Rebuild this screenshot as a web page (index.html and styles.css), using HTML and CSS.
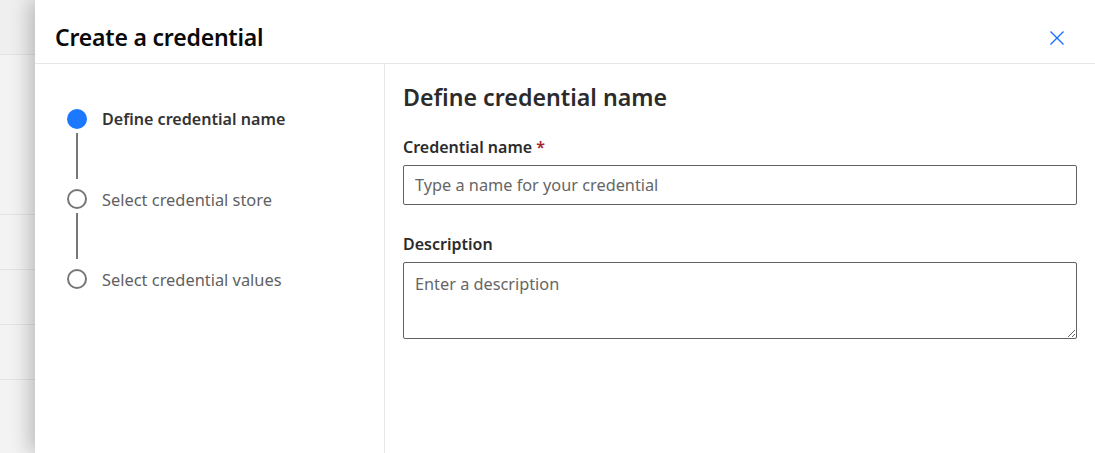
FILE: index.html
```html
<!DOCTYPE html>
<html lang="en">
<head>
<meta charset="utf-8">
<title>Create a credential</title>
<link rel="stylesheet" href="styles.css">
</head>
<body>
<div class="page">
  <div class="backdrop">
    <div class="bd-head"></div>
    <div class="bd-row r1"></div>
    <div class="bd-row"></div>
    <div class="bd-row"></div>
    <div class="bd-row"></div>
  </div>
  <div class="panel">
    <header class="panel-head">
      <h1 class="title">Create a credential</h1>
      <button class="close" aria-label="Close">
        <svg width="14" height="14" viewBox="0 0 14 14"><path d="M0.5 0.5 L13.5 13.5 M13.5 0.5 L0.5 13.5" stroke="#0f6cff" stroke-width="1.3" fill="none"/></svg>
      </button>
    </header>
    <div class="panel-body">
      <nav class="steps">
        <div class="step active">
          <span class="dot"></span>
          <span class="step-label">Define credential name</span>
        </div>
        <div class="connector"></div>
        <div class="step">
          <span class="dot"></span>
          <span class="step-label">Select credential store</span>
        </div>
        <div class="connector"></div>
        <div class="step">
          <span class="dot"></span>
          <span class="step-label">Select credential values</span>
        </div>
      </nav>
      <main class="content">
        <h2 class="section-title">Define credential name</h2>
        <div class="field">
          <label class="label" for="cname">Credential name <span class="req">*</span></label>
          <input id="cname" class="input" type="text" placeholder="Type a name for your credential">
        </div>
        <div class="field">
          <label class="label" for="cdesc">Description</label>
          <textarea id="cdesc" class="textarea" placeholder="Enter a description"></textarea>
        </div>
      </main>
    </div>
  </div>
</div>
</body>
</html>
```
FILE: styles.css
```css
* { box-sizing: border-box; }
html, body { margin: 0; padding: 0; height: 100%; }
body {
  font-family: "Noto Sans", "Open Sans", sans-serif;
  color: #242424;
  background: #fff;
  overflow: hidden;
}
.page {
  display: flex;
  height: 453px;
  width: 1095px;
}
.backdrop {
  width: 35px;
  flex: none;
  background: #f3f3f3;
  display: flex;
  flex-direction: column;
}
.bd-head { height: 55px; border-bottom: 1px solid #e3e3e3; background: #efefef; }
.bd-row { height: 55px; border-bottom: 1px solid #e3e3e3; }
.bd-row.r1 { height: 160px; }
.panel {
  flex: 1;
  background: #fff;
  box-shadow: -6px 0 18px rgba(0,0,0,0.22);
  display: flex;
  flex-direction: column;
  position: relative;
  z-index: 1;
}
.panel-head {
  height: 64px;
  border-bottom: 1px solid #e6e6e6;
  display: flex;
  align-items: center;
  justify-content: space-between;
  padding: 10px 31px 0 20px;
}
.title {
  margin: 0;
  font-size: 23px;
  line-height: 30px;
  font-weight: 600;
  color: #0a0a0a;
  letter-spacing: -0.2px;
}
.close {
  border: 0;
  background: none;
  padding: 0;
  width: 14px;
  height: 14px;
  display: flex;
  margin-top: 2px;
}
.panel-body {
  flex: 1;
  display: flex;
}
.steps {
  width: 350px;
  flex: none;
  border-right: 1px solid #e6e6e6;
  padding: 45px 0 0 32px;
}
.step {
  display: flex;
  align-items: center;
  height: 20px;
}
.dot {
  width: 20px;
  height: 20px;
  border-radius: 50%;
  border: 2px solid #777;
  flex: none;
  margin-right: 15px;
}
.step.active .dot { background: #1b78ff; border-color: #1b78ff; }
.step-label { font-size: 16.4px; color: #616161; }
.step.active .step-label { font-size: 16.1px; font-weight: 600; color: #333; }
.connector {
  width: 2px;
  height: 46px;
  background: #777;
  margin: 4px 0 10px 9px;
}
.content {
  flex: 1;
  padding: 17px 18px 0 18px;
}
.section-title {
  margin: 0 0 23px;
  font-size: 23.2px;
  line-height: 32px;
  font-weight: 600;
  color: #2b2b2b;
}
.field { margin-bottom: 28px; }
.label {
  display: block;
  font-size: 16px;
  line-height: 22px;
  font-weight: 600;
  color: #2b2b2b;
  margin-bottom: 7px;
}
.req { color: #a4262c; }
.input, .textarea {
  display: block;
  width: 100%;
  border: 1px solid #616161;
  border-radius: 2px;
  font-family: inherit;
  font-size: 16.3px;
  color: #333;
  padding: 0 11px;
  background: #fff;
}
.input { height: 40px; }
.textarea { height: 77px; padding-top: 10px; resize: vertical; }
.input::placeholder, .textarea::placeholder { color: #666; }
```
